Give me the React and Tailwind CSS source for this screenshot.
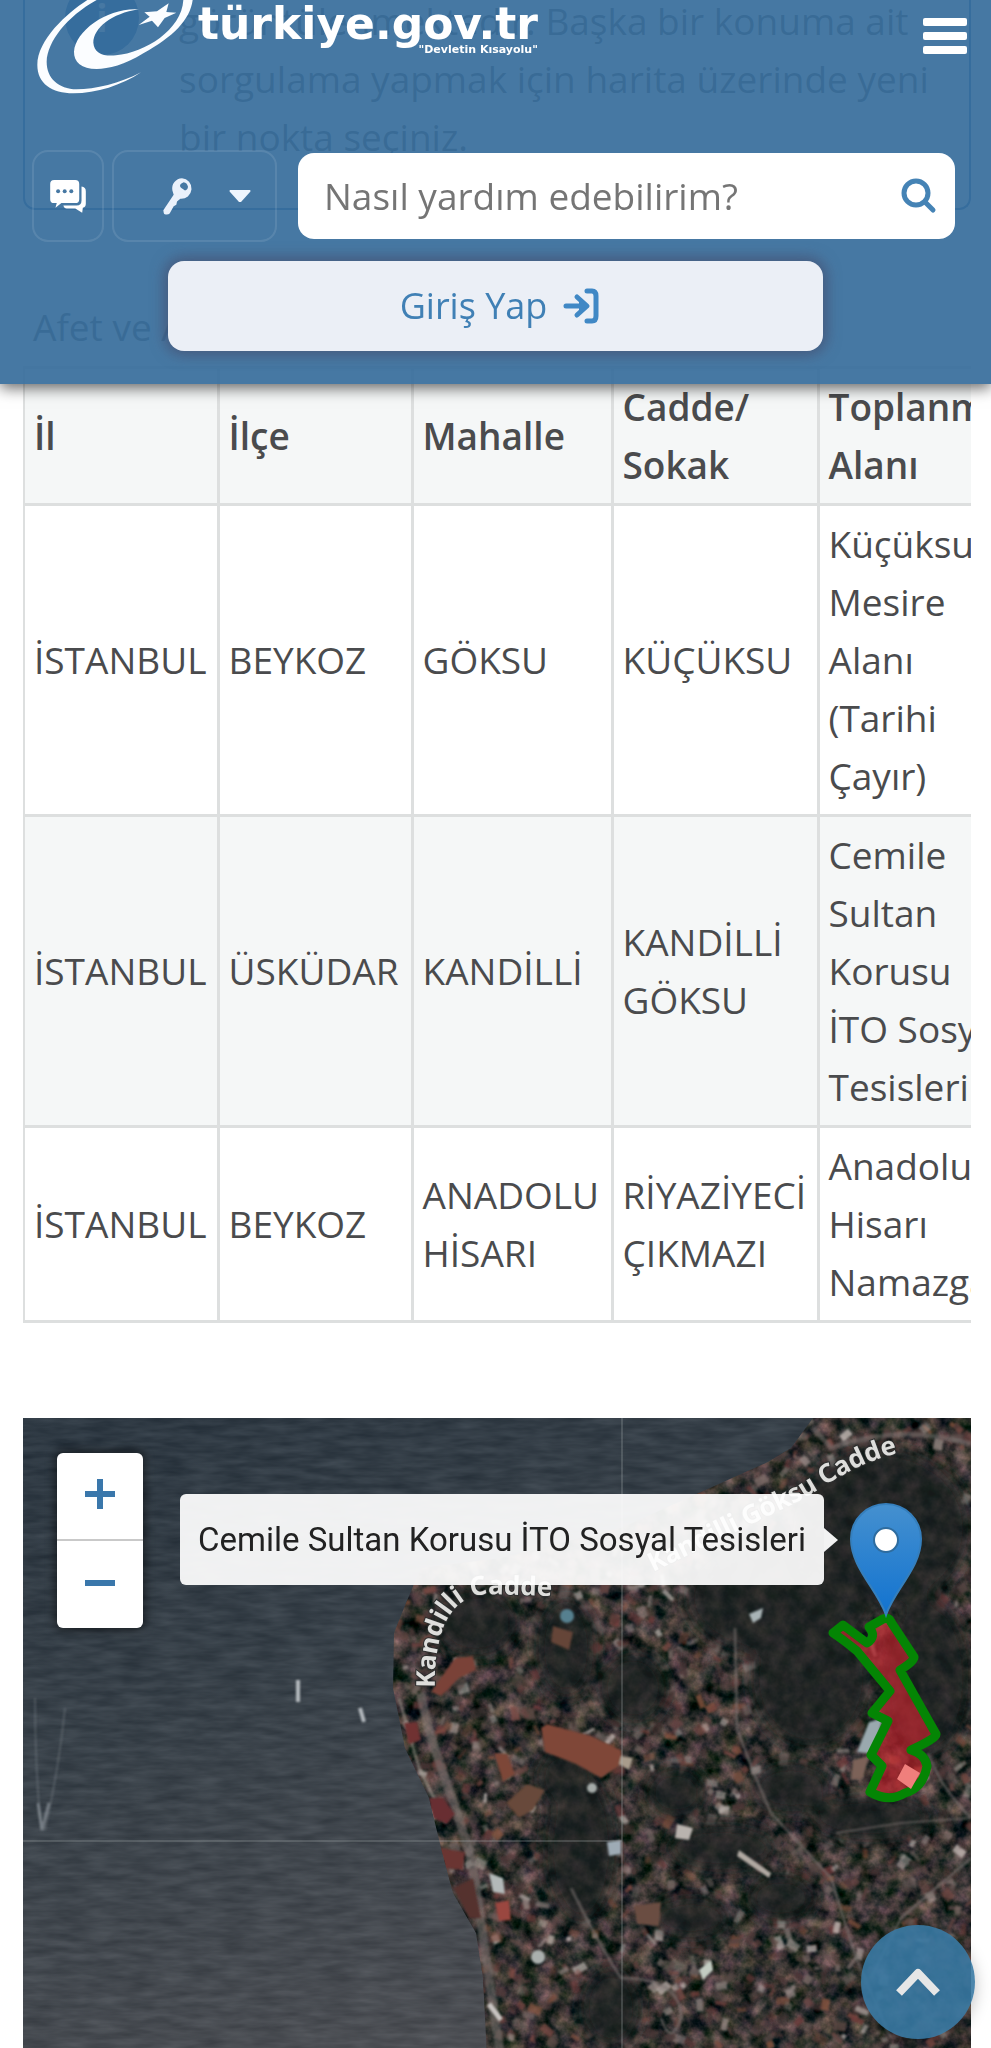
// src/App.jsx
import React from 'react';

const columns = ['İl', 'İlçe', 'Mahalle', 'Cadde/ Sokak', 'Toplanma Alanı'];

const rows = [
  ['İSTANBUL', 'BEYKOZ', 'GÖKSU', 'KÜÇÜKSU', 'Küçüksu Mesire Alanı (Tarihi Çayır)'],
  ['İSTANBUL', 'ÜSKÜDAR', 'KANDİLLİ', 'KANDİLLİ GÖKSU', 'Cemile Sultan Korusu İTO Sosyal Tesisleri'],
  ['İSTANBUL', 'BEYKOZ', 'ANADOLU HİSARI', 'RİYAZİYECİ ÇIKMAZI', 'Anadolu Hisarı Namazgah']
];

const columnWidths = ['w-[194px]', 'w-[194px]', 'w-[200px]', 'w-[206px]', 'w-[206px]'];

const landPath =
  'M792 0 L770 30 L747 44 L680 74 L600 110 L480 140 L400 150 L385 185 L373 215 L372 270 L384 330 L408 380 L420 430 L432 475 L455 515 L462 560 L466 640 L960 640 L960 0Z';

// wooded areas that stay free of houses: [cx, cy, rx, ry]
const woods = [
  [860, 110, 90, 80],
  [455, 205, 42, 34],
  [545, 230, 30, 50],
  [760, 180, 95, 60],
  [612, 270, 34, 36],
  [790, 260, 60, 70],
  [560, 430, 36, 75],
  [545, 360, 30, 30],
  [700, 430, 55, 24],
  [655, 375, 30, 26],
  [905, 260, 45, 80],
  [590, 590, 30, 40],
  [760, 480, 34, 24],
  [670, 500, 40, 22],
  [770, 370, 40, 26],
  [850, 400, 60, 24]
];

const roofColors = [
  '#6a4644', '#7e4b44', '#4f3838', '#84523f', '#574745', '#7a6b67',
  '#3a3030', '#703c3b', '#978a86', '#463434', '#5f4b46', '#c0b6b1'
];

const randomFrom = (seed) => {
  let s = seed;
  return () => {
    s = (s * 16807) % 2147483647;
    return s / 2147483647;
  };
};

const inWoods = (x, y) =>
  woods.some(([cx, cy, rx, ry]) => ((x - cx) / rx) ** 2 + ((y - cy) / ry) ** 2 < 1);

const buildHouses = () => {
  const rand = randomFrom(4217);
  const list = [];
  for (let i = 0; i < 1900; i++) {
    const x = 375 + rand() * 576;
    const y = rand() * 632;
    const w = 4 + rand() * 10;
    const h = 3 + rand() * 7;
    const angle = rand() * 180;
    const color = roofColors[Math.floor(rand() * roofColors.length)];
    const opacity = 0.35 + rand() * 0.5;
    if (inWoods(x, y)) continue;
    list.push({ x, y, w, h, angle, color, opacity });
  }
  return list;
};

const houses = buildHouses();

const Logo = () => (
  <a href="#" className="flex items-start text-white" aria-label="türkiye.gov.tr">
    <svg viewBox="0 0 492 300" className="w-[164px] h-[100px]" fill="#fbfdff">
      <path d="M172 0 C110 40 22 120 22 195 C22 250 65 280 130 280 C200 280 275 256 333 217 C270 250 195 268 140 268 C85 266 50 235 50 185 C52 125 110 50 200 0Z" />
      <path d="M488 0 C480 60 430 110 340 160 C285 195 235 207 200 207 C155 207 131 185 132 155 C137 90 235 22 326 28 C245 40 190 85 190 128 C192 158 218 170 258 166 C345 158 455 90 460 0Z" />
      <path d="M416 10 L409 36 L439 38 L404 54 L384 82 L366 62 L326 75 L359 50 L343 37 L381 34Z" />
    </svg>
    <span className="flex flex-col items-end ml-1 pt-1 font-['DejaVu_Sans','Verdana',sans-serif] font-bold">
      <span className="text-[44px] leading-[40px]">türkiye.gov.tr</span>
      <span className="text-[11px] leading-[12px]">"Devletin Kısayolu"</span>
    </span>
  </a>
);

const ChatIcon = () => (
  <svg viewBox="0 0 108 100" className="w-9 h-[33px]" fill="#fff">
    <path d="M12 0 H76 Q88 0 88 12 V58 Q88 70 76 70 H34 L16 84 L20 70 H12 Q0 70 0 58 V12 Q0 0 12 0Z" />
    <path d="M95 20 Q108 22 108 34 V72 Q108 82 99 84 L97 99 L76 86 H50 Q42 86 40 77 H80 Q95 77 95 62Z" />
    <g fill="#4678a3">
      <circle cx="24" cy="34" r="6" />
      <circle cx="44" cy="34" r="6" />
      <circle cx="64" cy="34" r="6" />
    </g>
  </svg>
);

const KeyIcon = () => (
  <svg viewBox="0 0 90 110" className="w-[30px] h-[37px]">
    <path
      fill="#eaf1fb"
      fillRule="evenodd"
      d="M57 0 A31 31 0 1 1 52 62 L42 70 L40 80 L32 84 L20 106 Q16 110 8 109 Q2 109 2 103 L1 96 L32 50 L28 36 A31 31 0 0 1 57 0Z M54 17 Q48 23 54 29 L66 37 Q74 36 75 26 Q72 13 62 12Z"
    />
  </svg>
);

const SearchIcon = () => (
  <svg viewBox="0 0 36 36" className="w-9 h-9" fill="none" stroke="#4583b5">
    <circle cx="15" cy="15" r="12" strokeWidth="5" />
    <path d="M24 24 L32 32" strokeWidth="5" strokeLinecap="round" />
  </svg>
);

const LoginIcon = () => (
  <svg viewBox="0 0 36 36" className="w-9 h-9" fill="none" stroke="#4088c5" strokeWidth="5" strokeLinecap="round" strokeLinejoin="round">
    <path d="M3 18 H23 M14 9 L24 18 L14 27" />
    <path d="M17 12 L24 18 L17 24Z" fill="#4088c5" strokeWidth="2" />
    <path d="M24 3 H29 Q33 3 33 8 V28 Q33 33 29 33 H24" />
  </svg>
);

const Header = () => (
  <header className="fixed inset-x-0 top-0 z-20 bg-[#386e9c]/93 pb-[33px] shadow-[0_4px_14px_rgba(0,0,0,0.6)]">
    <div className="flex items-start justify-between pl-[30px] pr-6">
      <Logo />
      <button type="button" aria-label="Menü" className="flex flex-col gap-[6px] w-11 mt-[18px]">
        <span className="h-2 w-full rounded-xs bg-white" />
        <span className="h-2 w-full rounded-xs bg-white" />
        <span className="h-2 w-full rounded-xs bg-white" />
      </button>
    </div>

    {/* Tools and search */}
    <div className="flex items-center mt-[50px] pl-8 pr-9">
      <button
        type="button"
        aria-label="Canlı destek"
        className="flex items-center justify-center w-[72px] h-[92px] rounded-2xl border-2 border-white/10"
      >
        <ChatIcon />
      </button>
      <button
        type="button"
        aria-label="Hızlı erişim"
        className="flex items-center justify-end gap-9 w-[165px] h-[92px] ml-2 pr-6 rounded-2xl border-2 border-white/10"
      >
        <KeyIcon />
        <svg viewBox="0 0 22 12" className="w-[22px] h-3" fill="#eef5fd">
          <path d="M1 0 H21 Q22 1 21 2 L12 12 H10 L1 2 Q0 1 1 0Z" />
        </svg>
      </button>
      <form className="flex flex-1 items-center h-[86px] ml-[21px] pl-[26px] pr-[18px] rounded-2xl bg-white">
        <input
          type="text"
          aria-label="Arama"
          placeholder="Nasıl yardım edebilirim?"
          className="flex-1 min-w-0 text-[37px] placeholder-[#757575] outline-none"
        />
        <button type="button" aria-label="Ara">
          <SearchIcon />
        </button>
      </form>
    </div>

    <a
      href="#"
      className="flex items-center justify-center gap-4 w-[66%] h-[90px] mx-auto mt-[19px] pl-2 rounded-2xl bg-[#ebeff6] text-[36px] text-[#4080b5] shadow-[0_0_14px_4px_rgba(70,70,100,0.6)]"
    >
      Giriş Yap
      <LoginIcon />
    </a>
  </header>
);

const AreaTable = () => (
  <div className="mt-[73px] overflow-x-auto [scrollbar-width:none]">
    <table className="table-fixed w-[1000px] border-collapse text-left text-[#4a4b4d]">
      <caption className="px-[10px] pt-1 text-left leading-[79px] bg-[#f5f7f7] text-[#4a4b4d]">
        Afet ve Acil Durum Toplanma Alanları
      </caption>
      <thead>
        <tr className="bg-[#f5f7f7]">
          {columns.map((name, idx) => (
            <th key={name} scope="col" className={`${columnWidths[idx]} px-[9px] py-[9px] border-[3px] border-l-2 border-[#dddfdf] font-semibold`}>
              {name}
            </th>
          ))}
        </tr>
      </thead>
      <tbody>
        {rows.map((row, idx) => (
          <tr key={idx} className="even:bg-[#f5f7f7]">
            {row.map((cell, i) => (
              <td key={i} className="px-[9px] py-[9px] border-[3px] border-l-2 border-[#dddfdf]">
                {cell}
              </td>
            ))}
          </tr>
        ))}
      </tbody>
    </table>
  </div>
);

const Satellite = () => (
  <svg viewBox="2 0 948 632" preserveAspectRatio="xMinYMin slice" className="block w-full h-[632px]">
    <defs>
      <linearGradient id="sea" x1="0" y1="0" x2="0.5" y2="1">
        <stop offset="0" stopColor="#2b3742" />
        <stop offset="0.45" stopColor="#3a434b" />
        <stop offset="1" stopColor="#56565a" />
      </linearGradient>
      <filter id="waves" x="0" y="0" width="100%" height="100%" colorInterpolationFilters="sRGB">
        <feTurbulence type="fractalNoise" baseFrequency="0.03 0.14" numOctaves="3" seed="8" />
        <feColorMatrix values="0.5 0 0 0 -0.04  0.5 0 0 0 -0.01  0.5 0 0 0 0.02  0 0 0 0 1" />
      </filter>
      <filter id="ground" x="0" y="0" width="100%" height="100%" colorInterpolationFilters="sRGB">
        <feTurbulence type="fractalNoise" baseFrequency="0.06" numOctaves="4" seed="21" />
        <feColorMatrix values="0.85 0 0 0 -0.22  0.55 0.1 0 0 -0.13  0.55 0 0.1 0 -0.14  0 0 0 0 1" />
      </filter>
      <filter id="soft">
        <feGaussianBlur stdDeviation="1.3" />
      </filter>
      <filter id="softer">
        <feGaussianBlur stdDeviation="8" />
      </filter>
      <clipPath id="land">
        <path d={landPath} />
      </clipPath>
      <linearGradient id="pin" x1="0" y1="0" x2="0" y2="1">
        <stop offset="0" stopColor="#4590cf" />
        <stop offset="1" stopColor="#1273d0" />
      </linearGradient>
      <path id="street-one" d="M414 270 C413 215 428 178 466 176 L560 179" />
      <path id="street-two" d="M632 154 L780 82 C815 62 845 36 910 30" />
    </defs>

    {/* Sea */}
    <rect width="952" height="632" fill="url(#sea)" />
    <rect width="952" height="632" filter="url(#waves)" opacity="0.25" />
    <g fill="none" stroke="#8d949b" strokeWidth="2" filter="url(#soft)">
      <path d="M14 280 Q14 350 20 410 M44 290 Q38 350 24 412" opacity="0.3" />
      <path d="M17 385 L21 412 L28 385" opacity="0.7" strokeWidth="3" />
      <path d="M277 262 V284 M339 290 L343 304" stroke="#b4b9be" strokeWidth="4" />
    </g>

    {/* Land */}
    <g clipPath="url(#land)">
      <rect x="360" width="592" height="632" filter="url(#ground)" />
      <g filter="url(#soft)">
        {houses.map((h, idx) => (
          <rect
            key={idx}
            x={h.x - h.w / 2}
            y={h.y - h.h / 2}
            width={h.w}
            height={h.h}
            fill={h.color}
            opacity={h.opacity}
            transform={`rotate(${h.angle} ${h.x} ${h.y})`}
          />
        ))}
      </g>
      <g fill="#1d2424" opacity="0.75" filter="url(#softer)">
        {woods.map(([cx, cy, rx, ry], idx) => (
          <ellipse key={idx} cx={cx} cy={cy} rx={rx} ry={ry} />
        ))}
      </g>
      <g fill="none" stroke="#7b7371" strokeWidth="3" opacity="0.55" filter="url(#soft)">
        <path d="M400 275 C410 340 445 400 455 470 C465 540 472 590 480 640" strokeWidth="9" />
        <path d="M378 280 L398 350 L425 405" stroke="#a09a90" />
        <path d="M714 210 L716 310 Q730 350 750 395 L810 460 L835 540 L870 620" />
        <path d="M907 335 Q920 370 950 400" />
        <path d="M950 440 L880 500 L850 560" />
        <path d="M550 470 Q580 530 600 560 Q660 560 660 600 Q650 630 640 600" />
        <path d="M815 415 L880 405 L950 400" strokeWidth="2" />
        <path d="M792 10 L810 30 Q880 5 950 26" strokeWidth="5" />
      </g>
      <g filter="url(#soft)">
        <path d="M520 310 L526 306 L570 318 L600 332 L602 345 L580 360 L555 346 L524 334Z" fill="#7f4639" />
        <path d="M600 338 L612 340 L608 352 L598 346Z" fill="#a89c8c" />
        <path d="M473 335 L486 336 L494 356 L482 364Z" fill="#7d4739" />
        <path d="M434 240 L452 238 L455 252 L438 260 L420 278 L410 274Z" fill="#7a4238" />
        <path d="M532 208 L552 214 L548 232 L530 224Z" fill="#654437" />
        <path d="M485 385 L506 366 L524 372 L512 392 L498 400Z" fill="#684a3b" />
        <path d="M613 488 L640 484 L638 508 L616 506Z" fill="#6b4e42" />
        <path d="M383 305 L396 304 L400 322 L388 326Z" fill="#6f3133" />
        <path d="M408 380 L422 380 L434 396 L426 406 L412 400Z" fill="#682f33" />
        <path d="M418 430 L444 434 L442 452 L424 450Z" fill="#6b3430" />
        <path d="M432 470 L452 460 L460 500 L448 500Z" fill="#55322f" />
        <circle cx="546" cy="198" r="7" fill="#56808f" />
        <path d="M656 406 L672 410 L668 422 L654 420Z" fill="#b9b3ae" />
        <circle cx="571" cy="370" r="5" fill="#a5aaa8" />
        <path d="M728 196 L742 190 L740 200 L732 205Z" fill="#a9b4b6" />
        <path d="M586 424 L600 422 L600 436 L588 438Z" fill="#9eabb5" />
        <circle cx="517" cy="539" r="7" fill="#aab0ae" />
        <path d="M468 455 L482 460 L484 476 L472 474Z" fill="#b3b9b9" />
        <path d="M474 485 L488 482 L490 502 L478 503Z" fill="#9a463f" />
        <path d="M718 432 L750 455 L748 460 L716 438Z" fill="#b0a9a2" />
        <path d="M678 552 L690 542 L692 552 L682 562Z" fill="#c3ccc2" />
        <path d="M468 586 L480 602" stroke="#c9c5c2" strokeWidth="5" />
        <path d="M848 304 L862 300 L852 336 L836 334Z" fill="#9aa9ae" />
        <path d="M832 342 L848 338 L842 360 L830 362Z" fill="#7b6258" />
      </g>
    </g>

    {/* Tile seams */}
    <path d="M601 0 V632 M0 423 H601" stroke="#aab0b2" strokeWidth="1" opacity="0.5" />

    {/* Street names */}
    <g
      className="font-['Noto_Sans','Open_Sans',sans-serif] text-[26px] font-bold"
      fill="#dededc"
      stroke="#2d2f2f"
      strokeWidth="2"
      paintOrder="stroke"
    >
      <text>
        <textPath href="#street-one">Kandilli Cadde</textPath>
      </text>
      <text>
        <textPath href="#street-two">Kandilli Göksu Cadde</textPath>
      </text>
    </g>

    {/* Selected area */}
    <path
      d="M812 215 L822 207 L846 225 Q856 219 848 209 L862 201 Q868 199 870 204 L893 239 Q894 243 879 252 L915 316 Q916 320 890 332 Q904 336 906 348 Q902 370 884 375 Q868 385 849 374 L861 348 L850 337 L867 303 L851 295 L869 273 L836 233 Q820 220 812 215Z"
      fill="#d42531"
      fillOpacity="0.62"
      stroke="#048504"
      strokeWidth="9"
      strokeLinejoin="round"
    />
    <path d="M876 361 L884 346 L899 355 L890 371Z" fill="#f07f7c" />

    {/* Marker */}
    <path
      d="M865 197 C857 172 830 150 830 121 A35 35 0 0 1 900 121 C900 150 873 172 865 197Z"
      fill="url(#pin)"
      stroke="#357fbd"
      strokeWidth="2"
    />
    <circle cx="865" cy="122" r="12" fill="#fff" stroke="#2e6c9f" strokeWidth="2" />
  </svg>
);

const Map = () => (
  <section aria-label="Harita" className="relative mt-[95px] bg-[#39434b]">
    <Satellite />
    <div className="absolute left-[34px] top-[35px] flex flex-col w-[86px] rounded-md bg-white shadow-[0_0_8px_3px_rgba(0,0,0,0.45)]">
      <button type="button" aria-label="Yakınlaştır" className="flex items-center justify-center h-[88px] pb-1 border-b-2 border-[#c9c9c9]">
        <svg viewBox="0 0 30 30" className="w-[30px] h-[30px]" stroke="#3a77ab" strokeWidth="6">
          <path d="M0 15 H30 M15 0 V30" />
        </svg>
      </button>
      <button type="button" aria-label="Uzaklaştır" className="flex items-center justify-center h-[87px] pb-1">
        <svg viewBox="0 0 30 30" className="w-[30px] h-[30px]" stroke="#3a77ab" strokeWidth="6">
          <path d="M0 15 H30" />
        </svg>
      </button>
    </div>
    <div className="absolute left-[157px] top-[76px] flex items-center h-[91px] w-[644px] justify-center rounded-md bg-white/93 font-[Roboto,sans-serif] text-[33px] whitespace-nowrap text-[#222]">
      Cemile Sultan Korusu İTO Sosyal Tesisleri
      <span className="absolute left-full top-1/2 -translate-y-1/2 border-y-[12px] border-l-[14px] border-y-transparent border-l-[#f2f2f2]" />
    </div>
  </section>
);

const App = () => (
  <div className="bg-white font-['Open_Sans','Noto_Sans',sans-serif] text-[37px] leading-[58px]">
    <Header />
    <main className="pl-[23px] pr-5">
      {/* Location notice */}
      <div className="flex items-end h-[210px] pl-10 pb-[42px] overflow-hidden rounded-b-xl border-2 border-t-0 border-[#1d5fa8]">
        <span className="flex shrink-0 items-center justify-center w-[74px] h-[74px] mb-[111px] mr-10 rounded-full bg-[#1d5fa8] text-white font-bold">
          i
        </span>
        <p className="text-[#4a4b4d]">
          görüntülenmektedir. Başka bir konuma ait sorgulama yapmak için harita üzerinde yeni bir nokta seçiniz.
        </p>
      </div>
      <AreaTable />
      <Map />
    </main>
    <a
      href="#"
      aria-label="Yukarı çık"
      className="fixed bottom-[9px] right-4 z-10 flex items-center justify-center w-[114px] h-[114px] rounded-full bg-[#3879a3]/90 shadow-[0_4px_16px_rgba(0,0,0,0.25)]"
    >
      <svg viewBox="0 0 46 32" className="w-[46px] h-8" fill="none" stroke="#e6e6e6" strokeWidth="8" strokeLinejoin="round">
        <path d="M4 27 L23 7 L42 27" />
      </svg>
    </a>
  </div>
);

export default App;
